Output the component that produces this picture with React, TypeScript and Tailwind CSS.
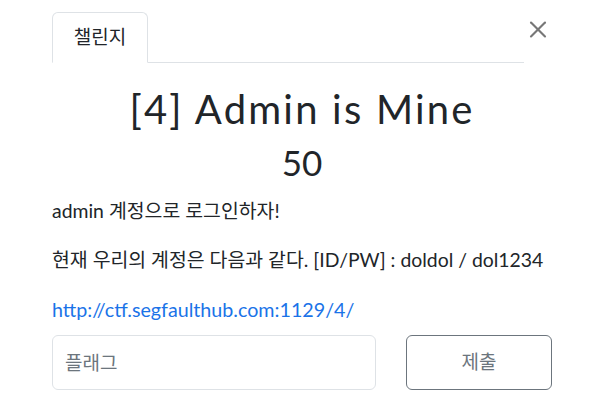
import { X } from "lucide-react";

const font = {
  fontFamily: '"Lato", "Noto Sans CJK KR", sans-serif',
};

export default function App() {
  return (
    <div
      className="w-[593px] h-[410px] bg-white text-[#212529] overflow-hidden"
      style={font}
    >
      <div className="pl-[52px] pr-[41px]">
        {/* tabs + close */}
        <div className="flex items-start pt-3">
          <div className="flex-1 flex border-b border-[#dee2e6]">
            <div className="w-[96px] h-[51px] -mb-px border border-b-white border-[#dee2e6] rounded-t-md bg-white flex items-center justify-center text-[19px]">
              챌린지
            </div>
          </div>
          <button className="w-[28px] mt-[3px] flex justify-end text-[#777]">
            <X size={29} strokeWidth={1.8} />
          </button>
        </div>

        <h2 className="text-center text-[40px] leading-[1.2] tracking-[2.2px] mt-[22px]">
          [4] Admin is Mine
        </h2>
        <h3 className="text-center text-[35px] leading-[1.2] mt-[8px]">50</h3>

        <div className="text-[19.4px] leading-[1.5] mt-[13px]">
          <p>admin 계정으로 로그인하자!</p>
          <p className="mt-[20px]">
            현재 우리의 계정은 다음과 같다. [ID/PW] : doldol / dol1234
          </p>
          <p className="mt-[21px]">
            <a href="#" className="text-[#1a73e8] text-[19.7px]">
              http://ctf.segfaulthub.com:1129/4/
            </a>
          </p>
        </div>

        <div className="flex gap-[30px] mt-[10px]">
          <input
            className="w-[324px] h-[55px] border border-[#dee2e6] rounded-md px-3 text-[19px] placeholder:text-[#6c757d] outline-none"
            placeholder="플래그"
          />
          <button className="flex-1 h-[55px] border border-[#6c757d] rounded-md text-[19px] text-[#6c757d]">
            제출
          </button>
        </div>
      </div>
    </div>
  );
}
